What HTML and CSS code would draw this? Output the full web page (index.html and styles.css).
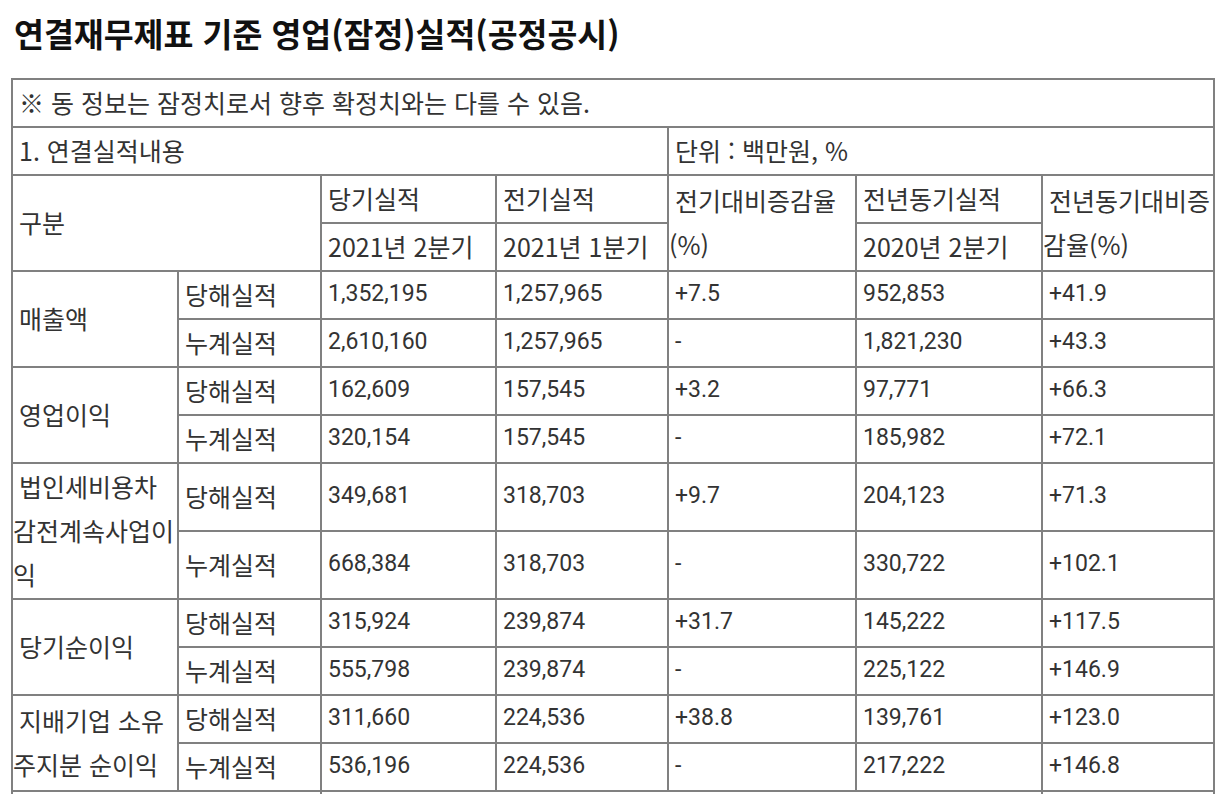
FILE: index.html
```html
<!DOCTYPE html>
<html lang="ko">
<head>
<meta charset="utf-8">
<title>연결재무제표 기준 영업(잠정)실적(공정공시)</title>
<link rel="stylesheet" href="styles.css">
</head>
<body>
<div class="page">
  <h1 class="title">연결재무제표 기준 영업(잠정)실적(공정공시)</h1>
  <table class="perf">
    <colgroup>
      <col class="c1"><col class="c2"><col class="c3"><col class="c4"><col class="c5"><col class="c6"><col class="c7">
    </colgroup>
    <tr><td colspan="7">※ 동 정보는 잠정치로서 향후 확정치와는 다를 수 있음.</td></tr>
    <tr><td colspan="4">1. 연결실적내용</td><td colspan="3">단위 : 백만원, %</td></tr>
    <tr>
      <td colspan="2" rowspan="2">구분</td>
      <td>당기실적</td>
      <td>전기실적</td>
      <td rowspan="2">전기대비증감율<br>(%)</td>
      <td>전년동기실적</td>
      <td rowspan="2">전년동기대비증<br>감율(%)</td>
    </tr>
    <tr><td>2021년 2분기</td><td>2021년 1분기</td><td>2020년 2분기</td></tr>

    <tr><td rowspan="2">매출액</td><td>당해실적</td><td class="n">1,352,195</td><td class="n">1,257,965</td><td class="n">+7.5</td><td class="n">952,853</td><td class="n">+41.9</td></tr>
    <tr><td>누계실적</td><td class="n">2,610,160</td><td class="n">1,257,965</td><td class="n">-</td><td class="n">1,821,230</td><td class="n">+43.3</td></tr>

    <tr><td rowspan="2">영업이익</td><td>당해실적</td><td class="n">162,609</td><td class="n">157,545</td><td class="n">+3.2</td><td class="n">97,771</td><td class="n">+66.3</td></tr>
    <tr><td>누계실적</td><td class="n">320,154</td><td class="n">157,545</td><td class="n">-</td><td class="n">185,982</td><td class="n">+72.1</td></tr>

    <tr><td rowspan="2">법인세비용차<br>감전계속사업이<br>익</td><td>당해실적</td><td class="n">349,681</td><td class="n">318,703</td><td class="n">+9.7</td><td class="n">204,123</td><td class="n">+71.3</td></tr>
    <tr><td>누계실적</td><td class="n">668,384</td><td class="n">318,703</td><td class="n">-</td><td class="n">330,722</td><td class="n">+102.1</td></tr>

    <tr><td rowspan="2">당기순이익</td><td>당해실적</td><td class="n">315,924</td><td class="n">239,874</td><td class="n">+31.7</td><td class="n">145,222</td><td class="n">+117.5</td></tr>
    <tr><td>누계실적</td><td class="n">555,798</td><td class="n">239,874</td><td class="n">-</td><td class="n">225,122</td><td class="n">+146.9</td></tr>

    <tr><td rowspan="2">지배기업 소유<br>주지분 순이익</td><td>당해실적</td><td class="n">311,660</td><td class="n">224,536</td><td class="n">+38.8</td><td class="n">139,761</td><td class="n">+123.0</td></tr>
    <tr><td>누계실적</td><td class="n">536,196</td><td class="n">224,536</td><td class="n">-</td><td class="n">217,222</td><td class="n">+146.8</td></tr>

    <tr class="next"><td colspan="2">&nbsp;</td><td colspan="4">&nbsp;</td><td>&nbsp;</td></tr>
  </table>
</div>
</body>
</html>
```

FILE: styles.css
```css
html, body {
  margin: 0;
  padding: 0;
  background: #ffffff;
}

body {
  font-family: "Noto Sans CJK KR", "Noto Sans", sans-serif;
  color: #333333;
}

.page {
  padding: 0 0 0 11px;
}

.title {
  margin: 0;
  padding: 17px 0 0 3px;
  height: 78px;
  box-sizing: border-box;
  font-family: "Noto Sans CJK KR", sans-serif;
  font-size: 32.5px;
  line-height: 32px;
  font-weight: 700;
  color: #111111;
}

.perf {
  border-collapse: collapse;
  table-layout: fixed;
  width: 1202px;
  font-size: 25px;
  line-height: 44px;
}

.perf .c1 { width: 166px; }
.perf .c2 { width: 143px; }
.perf .c3 { width: 175px; }
.perf .c4 { width: 172px; }
.perf .c5 { width: 188px; }
.perf .c6 { width: 186px; }
.perf .c7 { width: 172px; }

.perf td {
  border: 2px solid #808080;
  padding: 0 0 2px 0;
  text-indent: 6px;
  vertical-align: middle;
  white-space: nowrap;
}

.perf td.n {
  font-family: Roboto, "Noto Sans CJK KR", sans-serif;
  font-size: 23px;
}

.perf .next td {
  height: 60px;
}
```
